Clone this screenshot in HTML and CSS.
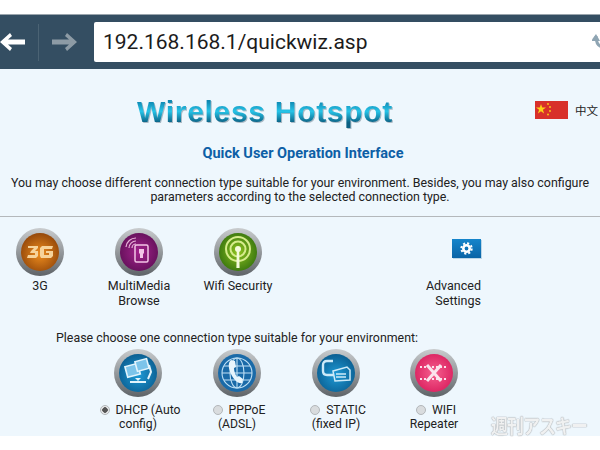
FILE: index.html
```html
<!DOCTYPE html>
<html lang="en">
<head>
    <meta charset="UTF-8">
    <title>Wireless Hotspot</title>
    <link rel="stylesheet" href="styles.css">
</head>
<body>

<svg class="defs" width="0" height="0">
    <defs>
        <linearGradient id="bezel" x1="0" y1="0" x2="0" y2="1">
            <stop offset="0" stop-color="#c9ccce"/>
            <stop offset="0.45" stop-color="#9a9ea1"/>
            <stop offset="1" stop-color="#5e6367"/>
        </linearGradient>
        <radialGradient id="orange" cx="0.5" cy="0.55" r="0.6">
            <stop offset="0" stop-color="#ee8d1e"/>
            <stop offset="1" stop-color="#8d4208"/>
        </radialGradient>
        <radialGradient id="purple" cx="0.5" cy="0.5" r="0.6">
            <stop offset="0" stop-color="#a3238c"/>
            <stop offset="1" stop-color="#5e0f55"/>
        </radialGradient>
        <radialGradient id="green" cx="0.5" cy="0.5" r="0.6">
            <stop offset="0" stop-color="#8fc31f"/>
            <stop offset="1" stop-color="#2f6d0d"/>
        </radialGradient>
        <radialGradient id="blue" cx="0.5" cy="0.55" r="0.6">
            <stop offset="0" stop-color="#1d9ad6"/>
            <stop offset="1" stop-color="#0a5a8c"/>
        </radialGradient>
        <radialGradient id="pink" cx="0.5" cy="0.5" r="0.6">
            <stop offset="0" stop-color="#f5608f"/>
            <stop offset="1" stop-color="#d91c5c"/>
        </radialGradient>
    </defs>
</svg>

<div id="top-gap"></div>

<div id="toolbar">
    <svg class="nav-arrow" width="26" height="20" viewBox="0 0 26 20">
        <path d="M0 10 L10 1 L12 4 L8 7.5 L25 7.5 L25 12.5 L8 12.5 L12 16 L10 19 Z" fill="#fff"/>
    </svg>
    <div class="nav-divider"></div>
    <svg class="nav-arrow" width="26" height="20" viewBox="0 0 26 20">
        <path d="M26 10 L16 1 L14 4 L18 7.5 L1 7.5 L1 12.5 L18 12.5 L14 16 L16 19 Z" fill="#8d9ba5"/>
    </svg>
    <div id="url-box">
        <span id="url-text">192.168.168.1/quickwiz.asp</span>
        <svg id="reload" width="8" height="16" viewBox="0 0 8 16">
            <path d="M4 2 Q4 13 12 13" fill="none" stroke="#8fa5b3" stroke-width="3"/>
            <path d="M-1 7 L4 0 L8 7 Z" fill="#8fa5b3"/>
        </svg>
    </div>
</div>

<div id="main-content">
    <div id="header">
        <div id="logo">Wireless Hotspot</div>
        <div id="lang">
            <svg width="33" height="18" viewBox="0 0 33 18">
                <rect width="33" height="18" fill="#d8302a"/>
                <path d="M6 3 L7.2 6.6 L11 6.6 L7.9 8.8 L9.1 12.4 L6 10.2 L2.9 12.4 L4.1 8.8 L1 6.6 L4.8 6.6 Z" fill="#fcd116"/>
                <circle cx="13" cy="3" r="0.9" fill="#fcd116"/>
                <circle cx="15" cy="6" r="0.9" fill="#fcd116"/>
                <circle cx="15" cy="10" r="0.9" fill="#fcd116"/>
                <circle cx="13" cy="13.5" r="0.9" fill="#fcd116"/>
            </svg>
            <span>中文</span>
        </div>
    </div>

    <div id="sub-title">Quick User Operation Interface</div>
    <div id="intro">You may choose different connection type suitable for your environment. Besides, you may also configure<br>parameters according to the selected connection type.</div>
    <div class="divider"></div>

    <div class="menu-row">
        <div class="menu-item">
            <svg class="round-icon" width="50" height="50" viewBox="0 0 50 50">
                <circle cx="25" cy="25" r="24" fill="url(#bezel)"/>
                <circle cx="25" cy="25" r="19" fill="url(#orange)"/>
                <path d="M13 19 H23 V21 L20 24 H23 V29 L21 31 H12 L13 28 H20 V26 H15 L16 24 L19 21 H13 Z" fill="#f6d39b"/>
                <path d="M27 19 H38 L37 22 H29 V28 H34 V26 H31 V24 H38 V29 L36 31 H26 L25 29 V21 Z" fill="#f6d39b"/>
            </svg>
            <div class="menu-label">3G</div>
        </div>
        <div class="menu-item">
            <svg class="round-icon" width="50" height="50" viewBox="0 0 50 50">
                <circle cx="25" cy="25" r="24" fill="url(#bezel)"/>
                <circle cx="25" cy="25" r="19" fill="url(#purple)"/>
                <rect x="21" y="18" width="13" height="17" rx="1.5" fill="none" stroke="#f3c6e6" stroke-width="1.5"/>
                <path d="M25 22 H30 V26 L29 27 V31 H26 V27 L25 26 Z" fill="#f3c6e6"/>
                <path d="M12 20 A10 10 0 0 1 22 11 M15 21 A7 7 0 0 1 22 14 M18 21 A4 4 0 0 1 22 17" fill="none" stroke="#e8b5d9" stroke-width="1.2"/>
            </svg>
            <div class="menu-label">MultiMedia<br>Browse</div>
        </div>
        <div class="menu-item">
            <svg class="round-icon" width="50" height="50" viewBox="0 0 50 50">
                <circle cx="25" cy="25" r="24" fill="url(#bezel)"/>
                <circle cx="25" cy="25" r="19" fill="url(#green)"/>
                <circle cx="25" cy="22" r="12" fill="none" stroke="#d6ec8c" stroke-width="2"/>
                <circle cx="25" cy="22" r="7.5" fill="none" stroke="#d6ec8c" stroke-width="2"/>
                <circle cx="25" cy="22" r="3" fill="#f4fadc"/>
                <path d="M23.8 22 H26.2 L26.6 41 H23.4 Z" fill="#f4fadc"/>
            </svg>
            <div class="menu-label">Wifi Security</div>
        </div>
        <div class="menu-item advanced">
            <div class="btn-advanced">
                <svg width="13" height="13" viewBox="0 0 13 13">
                    <circle cx="6.5" cy="6.5" r="3.2" fill="none" stroke="#fff" stroke-width="2.6"/>
                    <circle cx="6.5" cy="6.5" r="5.2" fill="none" stroke="#fff" stroke-width="2" stroke-dasharray="2.1 1.98"/>
                </svg>
            </div>
            <div class="menu-label">Advanced<br>Settings</div>
        </div>
    </div>

    <div id="prompt">Please choose one connection type suitable for your environment:</div>

    <div class="conn-row">
        <div class="conn-item">
            <svg class="round-icon" width="50" height="50" viewBox="0 0 50 50">
                <circle cx="25" cy="25" r="24" fill="url(#bezel)"/>
                <circle cx="25" cy="25" r="19" fill="url(#blue)"/>
                <rect x="13" y="17" width="13" height="11" fill="#7cc4ea" stroke="#e2f4fc" stroke-width="1.6" transform="rotate(-15 19 22)"/>
                <rect x="23" y="12" width="12" height="10" fill="#7cc4ea" stroke="#e2f4fc" stroke-width="1.6" transform="rotate(-15 29 17)"/>
                <path d="M36 17 L38 24 L35 31 M17 34 H33" fill="none" stroke="#e2f4fc" stroke-width="2"/>
                <path d="M22 30 L25 33 L28 30 Z" fill="#e2f4fc"/>
            </svg>
            <div class="conn-label"><span class="radio checked"></span>DHCP (Auto<br>config)</div>
        </div>
        <div class="conn-item">
            <svg class="round-icon" width="50" height="50" viewBox="0 0 50 50">
                <circle cx="25" cy="25" r="24" fill="url(#bezel)"/>
                <circle cx="25" cy="25" r="19" fill="#1a6aa8"/>
                <g fill="none" stroke="#bfe0f5" stroke-width="1.1">
                    <circle cx="25" cy="25" r="15"/>
                    <ellipse cx="25" cy="25" rx="7" ry="15"/>
                    <path d="M25 10 V40 M10 25 H40 M12 18 H38 M12 32 H38"/>
                </g>
                <path d="M19 12 C16 14 16 20 19 26 C22 32 26 36 30 35 L31 31 L27 28 L25 29 C23 26 22 23 22 20 L24 19 L23 13 Z" fill="#e9f5fc"/>
            </svg>
            <div class="conn-label"><span class="radio"></span>PPPoE<br>(ADSL)</div>
        </div>
        <div class="conn-item">
            <svg class="round-icon" width="50" height="50" viewBox="0 0 50 50">
                <circle cx="25" cy="25" r="24" fill="url(#bezel)"/>
                <circle cx="25" cy="25" r="19" fill="url(#blue)"/>
                <path d="M22 13 H16 Q12 13 12 17 V23 Q12 27 16 27 H23" fill="none" stroke="#cdeaf8" stroke-width="2.4"/>
                <path d="M22 23 L36 19 L39 22 V32 L24 33 Z M25 26 H35 M25 29 H35" fill="none" stroke="#cdeaf8" stroke-width="1.5"/>
            </svg>
            <div class="conn-label"><span class="radio"></span>STATIC<br>(fixed IP)</div>
        </div>
        <div class="conn-item">
            <svg class="round-icon" width="50" height="50" viewBox="0 0 50 50">
                <circle cx="25" cy="25" r="24" fill="url(#bezel)"/>
                <circle cx="25" cy="25" r="19" fill="url(#pink)"/>
                <path d="M18 17 L32 33 M32 17 L18 33" stroke="#fbe3ec" stroke-width="3"/>
                <path d="M11 19 H39 M11 31 H39" stroke="#fbe3ec" stroke-width="1.8" stroke-dasharray="2 2"/>
            </svg>
            <div class="conn-label"><span class="radio"></span>WIFI<br>Repeater</div>
        </div>
    </div>
</div>

<div id="watermark">週刊アスキー</div>

</body>
</html>
```

FILE: styles.css
```css
body {
    margin: 0;
    padding: 0;
    background-color: white;
    overflow: hidden;
    font-family: Roboto, "Noto Sans CJK SC", sans-serif;
    color: #222;
}

.defs {
    display: block;
    height: 0;
}

#top-gap {
    height: 14px;
}

#toolbar {
    height: 55px;
    display: flex;
    align-items: center;
    background-color: #344e62;
    border-top: 1px solid #9aa5ad;
    box-sizing: border-box;
}

.nav-arrow {
    flex: none;
}

.nav-divider {
    width: 1px;
    height: 37px;
    margin: 0 12px;
    background-color: #4b6374;
}

#url-box {
    flex: 1;
    height: 40px;
    margin-left: 17px;
    padding-left: 9px;
    display: flex;
    align-items: center;
    justify-content: space-between;
    background-color: white;
    border-radius: 2px 0 0 2px;
}

#url-text {
    font-size: 21px;
    color: #1c1c1c;
}

#main-content {
    height: 367px;
    background-color: #eef7fd;
    overflow: hidden;
}

#header {
    height: 60px;
    padding-top: 25px;
    box-sizing: border-box;
    display: flex;
    align-items: flex-start;
    padding-left: 137px;
}

#logo {
    width: 398px;
    font-family: "Liberation Sans", sans-serif;
    font-size: 30px;
    line-height: 36px;
    font-weight: bold;
    letter-spacing: 0.7px;
    white-space: nowrap;
    color: transparent;
    background: linear-gradient(#0e86b0 20%, #27c4e8 48%, #0a5f82 80%);
    -webkit-background-clip: text;
    background-clip: text;
    filter: drop-shadow(1px 1px 0.5px rgba(40, 70, 90, 0.35));
}

#lang {
    display: flex;
    align-items: center;
    gap: 7px;
    margin-top: 7px;
    font-size: 11.5px;
    white-space: nowrap;
}

#sub-title {
    margin-top: 16px;
    padding-left: 6px;
    text-align: center;
    font-size: 14.5px;
    line-height: 18px;
    font-weight: bold;
    color: #0d5fa6;
}

#intro {
    margin-top: 13px;
    text-align: center;
    font-size: 12.4px;
    line-height: 14px;
    color: #222;
    white-space: nowrap;
}

.divider {
    height: 1px;
    margin-top: 12px;
    background-color: #b4b8bb;
}

.menu-row {
    display: flex;
    gap: 19px;
    padding: 10px 119px 0 0;
}

.menu-item {
    width: 80px;
    display: flex;
    flex-direction: column;
    align-items: center;
}

.menu-label {
    margin-top: 1px;
    font-size: 12.5px;
    line-height: 15px;
    text-align: center;
}

.advanced {
    margin-left: auto;
    align-items: flex-end;
}

.advanced .menu-label {
    margin-top: 20px;
    text-align: right;
}

.btn-advanced {
    width: 29px;
    height: 19px;
    margin-top: 12px;
    display: flex;
    align-items: center;
    justify-content: center;
    background: linear-gradient(#1585cb, #0a64a6);
    box-shadow: 1px 1px 0 #bcd6e6;
}

#prompt {
    margin-top: 22px;
    padding-left: 56px;
    font-size: 12.4px;
    line-height: 15px;
}

.conn-row {
    display: flex;
    gap: 19px;
    padding: 3px 0 0 98px;
}

.conn-item {
    width: 80px;
    display: flex;
    flex-direction: column;
    align-items: center;
}

.conn-item:last-child {
    margin-left: -1px;
}

.conn-label {
    margin-top: 5px;
    font-size: 12.2px;
    line-height: 14px;
    text-align: center;
    white-space: nowrap;
}

.radio {
    display: inline-block;
    width: 10px;
    height: 10px;
    margin: 0 6px 0 4px;
    border-radius: 50%;
    box-sizing: border-box;
    border: 1px solid #b3b7ba;
    background-color: #d9dcde;
    vertical-align: -1px;
}

.radio.checked {
    background: radial-gradient(circle, #555 0, #555 2.5px, #e8e9ea 3px);
}

#watermark {
    position: absolute;
    left: 491px;
    top: 414px;
    font-family: "Noto Sans CJK JP", sans-serif;
    font-size: 17px;
    line-height: 24px;
    font-weight: bold;
    letter-spacing: -1px;
    white-space: nowrap;
    color: rgba(255, 255, 255, 0.85);
    text-shadow: 0 0 1px #9aa0a4, 0 0 1px #9aa0a4;
    transform: scaleY(1.2);
}
```
